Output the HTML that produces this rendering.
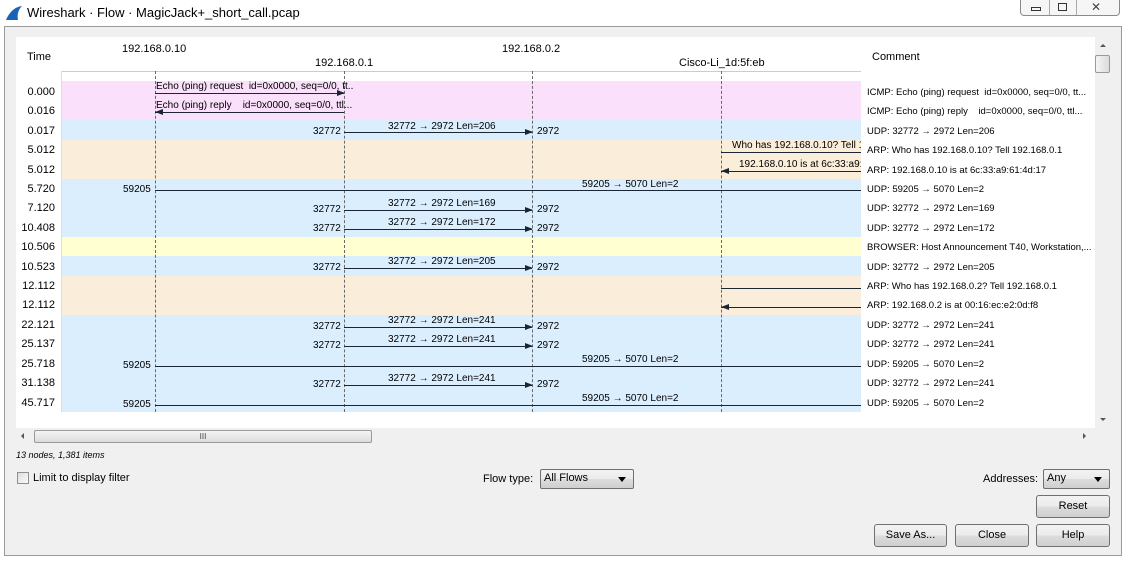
<!DOCTYPE html>
<html><head><meta charset="utf-8"><style>
*{margin:0;padding:0;box-sizing:border-box}
body{width:1126px;height:562px;background:#fff;font-family:"Liberation Sans",sans-serif;position:relative;overflow:hidden;color:#000}
div{position:absolute}
.t{font-size:10px;white-space:nowrap;line-height:12px}
.h{font-size:11px;white-space:nowrap}
.tm{font-size:11px;width:40px;text-align:right;left:15px;margin-top:1px}
.cm{font-size:9.5px;left:867px;white-space:nowrap;margin-top:1px}
.ln{height:1px;background:#1a2633}
.ar{width:0;height:0;border-top:3px solid transparent;border-bottom:3px solid transparent;border-left:8px solid #1a2633}
.al{width:0;height:0;border-top:3px solid transparent;border-bottom:3px solid transparent;border-right:8px solid #1a2633}
.v{width:0;border-left:1px dashed #6a6a6a;top:71px;height:341px}
.btn{border:1px solid #707070;border-radius:3px;background:linear-gradient(#f2f2f2,#ebebeb 50%,#dddddd 51%,#cfcfcf);font-size:11px;text-align:center;line-height:20px}
.cb{border:1px solid #707070;border-radius:2px;background:linear-gradient(#f2f2f2,#ebebeb 50%,#dddddd 51%,#cfcfcf);font-size:11px;line-height:17px;padding-left:3px}
.cb:after{content:"";position:absolute;right:7px;top:7px;border-left:4px solid transparent;border-right:4px solid transparent;border-top:5px solid #000}
</style></head><body>
<div style="left:5px;top:5px;width:18px;height:16px">
<svg width="18" height="16"><path d="M1 15 C4 8 9 2 17 1 C13 5 12 10 13 15 Z" fill="#1a64b8"/></svg></div>
<div style="left:27px;top:5px;font-size:13px">Wireshark · Flow · MagicJack+_short_call.pcap</div>
<div style="left:1020px;top:0;width:100px;height:16px;border:1px solid #8a8a8a;border-top:none;border-radius:0 0 4px 4px;background:#f6f6f6">
<div style="left:28px;top:0;width:1px;height:15px;background:#aaa"></div><div style="left:55px;top:0;width:1px;height:15px;background:#aaa"></div>
<div style="left:10px;top:7px;width:10px;height:4px;border:1px solid #333"></div>
<div style="left:37px;top:3px;width:9px;height:8px;border:1px solid #333"></div>
<div style="left:70px;top:0px;font-size:12px;color:#444">✕</div></div>
<div style="left:4px;top:26px;width:1118px;height:530px;background:#f0f0f0;border:1px solid #9a9a9a"></div>
<div style="left:16px;top:37px;width:1079px;height:391px;background:#fff"></div>
<div style="left:1095px;top:37px;width:16px;height:391px;background:#f0f0f0"></div>
<div style="left:1100px;top:44px;border-left:3px solid transparent;border-right:3px solid transparent;border-bottom:3px solid #555"></div>
<div style="left:1095px;top:55px;width:15px;height:18px;border:1px solid #999;border-radius:2px;background:linear-gradient(90deg,#f4f4f4,#dcdcdc)"></div>
<div style="left:1100px;top:418px;border-left:3px solid transparent;border-right:3px solid transparent;border-top:3px solid #555"></div>
<div style="left:16px;top:429px;width:1079px;height:15px;background:#f0f0f0"></div>
<div style="left:21px;top:433px;border-top:3px solid transparent;border-bottom:3px solid transparent;border-right:3px solid #555"></div>
<div style="left:34px;top:430px;width:338px;height:13px;border:1px solid #999;border-radius:2px;background:linear-gradient(#f4f4f4,#dcdcdc);font-size:8px;text-align:center;line-height:11px;color:#444">III</div>
<div style="left:1083px;top:433px;border-top:3px solid transparent;border-bottom:3px solid transparent;border-left:3px solid #555"></div>
<div class="h" style="left:27px;top:51px">Time</div>
<div class="h" style="left:122px;top:43px">192.168.0.10</div>
<div class="h" style="left:315px;top:57px">192.168.0.1</div>
<div class="h" style="left:502px;top:43px">192.168.0.2</div>
<div class="h" style="left:679px;top:57px">Cisco-Li_1d:5f:eb</div>
<div class="h" style="left:872px;top:51px">Comment</div>
<div style="left:61px;top:71px;width:800px;height:1px;background:#ccc"></div>
<div style="left:61px;top:71px;width:1px;height:341px;background:#ddd"></div>
<div style="left:62px;top:81px;width:799px;height:39px;background:#fbe0fb"></div>
<div style="left:62px;top:120px;width:799px;height:20px;background:#dbeefe"></div>
<div style="left:62px;top:140px;width:799px;height:39px;background:#faeeda"></div>
<div style="left:62px;top:179px;width:799px;height:58px;background:#dbeefe"></div>
<div style="left:62px;top:237px;width:799px;height:19px;background:#ffffd2"></div>
<div style="left:62px;top:256px;width:799px;height:20px;background:#dbeefe"></div>
<div style="left:62px;top:276px;width:799px;height:39px;background:#faeeda"></div>
<div style="left:62px;top:315px;width:799px;height:97px;background:#dbeefe"></div>
<div class="v" style="left:155px"></div><div class="v" style="left:344px"></div><div class="v" style="left:532px"></div><div class="v" style="left:721px"></div>
<div class="tm" style="top:85px">0.000</div>
<div class="tm" style="top:104px">0.016</div>
<div class="tm" style="top:124px">0.017</div>
<div class="tm" style="top:143px">5.012</div>
<div class="tm" style="top:163px">5.012</div>
<div class="tm" style="top:182px">5.720</div>
<div class="tm" style="top:201px">7.120</div>
<div class="tm" style="top:221px">10.408</div>
<div class="tm" style="top:240px">10.506</div>
<div class="tm" style="top:260px">10.523</div>
<div class="tm" style="top:279px">12.112</div>
<div class="tm" style="top:298px">12.112</div>
<div class="tm" style="top:318px">22.121</div>
<div class="tm" style="top:337px">25.137</div>
<div class="tm" style="top:357px">25.718</div>
<div class="tm" style="top:376px">31.138</div>
<div class="tm" style="top:396px">45.717</div>
<div class="t" style="left:156px;top:81px">Echo (ping) request&nbsp; id=0x0000, seq=0/0, tt..</div>
<div class="ln" style="left:155px;top:93px;width:189px"></div><div class="ar" style="left:337px;top:90px"></div>
<div class="t" style="left:156px;top:100px">Echo (ping) reply&nbsp;&nbsp;&nbsp; id=0x0000, seq=0/0, ttl...</div>
<div class="ln" style="left:155px;top:112px;width:189px"></div><div class="al" style="left:155px;top:109px"></div>
<div class="t" style="left:388px;top:121px">32772 → 2972 Len=206</div>
<div class="t" style="left:313px;top:126px">32772</div><div class="t" style="left:537px;top:126px">2972</div>
<div class="ln" style="left:344px;top:132px;width:188px"></div><div class="ar" style="left:525px;top:129px"></div>
<div class="t" style="left:732px;top:140px">Who has 192.168.0.10? Tell 192</div>
<div class="ln" style="left:721px;top:152px;width:140px"></div>
<div class="t" style="left:739px;top:159px">192.168.0.10 is at 6c:33:a9:61</div>
<div class="ln" style="left:721px;top:171px;width:140px"></div><div class="al" style="left:721px;top:168px"></div>
<div class="t" style="left:582px;top:179px">59205 → 5070 Len=2</div>
<div class="t" style="left:123px;top:184px">59205</div>
<div class="ln" style="left:155px;top:190px;width:706px"></div>
<div class="t" style="left:388px;top:198px">32772 → 2972 Len=169</div>
<div class="t" style="left:313px;top:204px">32772</div><div class="t" style="left:537px;top:204px">2972</div>
<div class="ln" style="left:344px;top:210px;width:188px"></div><div class="ar" style="left:525px;top:207px"></div>
<div class="t" style="left:388px;top:217px">32772 → 2972 Len=172</div>
<div class="t" style="left:313px;top:223px">32772</div><div class="t" style="left:537px;top:223px">2972</div>
<div class="ln" style="left:344px;top:229px;width:188px"></div><div class="ar" style="left:525px;top:226px"></div>
<div class="t" style="left:388px;top:256px">32772 → 2972 Len=205</div>
<div class="t" style="left:313px;top:262px">32772</div><div class="t" style="left:537px;top:262px">2972</div>
<div class="ln" style="left:344px;top:268px;width:188px"></div><div class="ar" style="left:525px;top:265px"></div>
<div class="ln" style="left:721px;top:288px;width:140px"></div>
<div class="ln" style="left:721px;top:307px;width:140px"></div><div class="al" style="left:721px;top:304px"></div>
<div class="t" style="left:388px;top:315px">32772 → 2972 Len=241</div>
<div class="t" style="left:313px;top:321px">32772</div><div class="t" style="left:537px;top:321px">2972</div>
<div class="ln" style="left:344px;top:327px;width:188px"></div><div class="ar" style="left:525px;top:324px"></div>
<div class="t" style="left:388px;top:334px">32772 → 2972 Len=241</div>
<div class="t" style="left:313px;top:340px">32772</div><div class="t" style="left:537px;top:340px">2972</div>
<div class="ln" style="left:344px;top:346px;width:188px"></div><div class="ar" style="left:525px;top:343px"></div>
<div class="t" style="left:582px;top:354px">59205 → 5070 Len=2</div>
<div class="t" style="left:123px;top:360px">59205</div>
<div class="ln" style="left:155px;top:366px;width:706px"></div>
<div class="t" style="left:388px;top:373px">32772 → 2972 Len=241</div>
<div class="t" style="left:313px;top:379px">32772</div><div class="t" style="left:537px;top:379px">2972</div>
<div class="ln" style="left:344px;top:385px;width:188px"></div><div class="ar" style="left:525px;top:382px"></div>
<div class="t" style="left:582px;top:393px">59205 → 5070 Len=2</div>
<div class="t" style="left:123px;top:399px">59205</div>
<div class="ln" style="left:155px;top:405px;width:706px"></div>
<div style="left:861px;top:71px;width:234px;height:342px;background:#fff"></div>
<div class="cm" style="top:86px">ICMP: Echo (ping) request&nbsp; id=0x0000, seq=0/0, tt...</div>
<div class="cm" style="top:105px">ICMP: Echo (ping) reply&nbsp;&nbsp;&nbsp; id=0x0000, seq=0/0, ttl...</div>
<div class="cm" style="top:125px">UDP: 32772 → 2972 Len=206</div>
<div class="cm" style="top:144px">ARP: Who has 192.168.0.10? Tell 192.168.0.1</div>
<div class="cm" style="top:164px">ARP: 192.168.0.10 is at 6c:33:a9:61:4d:17</div>
<div class="cm" style="top:183px">UDP: 59205 → 5070 Len=2</div>
<div class="cm" style="top:202px">UDP: 32772 → 2972 Len=169</div>
<div class="cm" style="top:222px">UDP: 32772 → 2972 Len=172</div>
<div class="cm" style="top:241px">BROWSER: Host Announcement T40, Workstation,...</div>
<div class="cm" style="top:261px">UDP: 32772 → 2972 Len=205</div>
<div class="cm" style="top:280px">ARP: Who has 192.168.0.2? Tell 192.168.0.1</div>
<div class="cm" style="top:299px">ARP: 192.168.0.2 is at 00:16:ec:e2:0d:f8</div>
<div class="cm" style="top:319px">UDP: 32772 → 2972 Len=241</div>
<div class="cm" style="top:338px">UDP: 32772 → 2972 Len=241</div>
<div class="cm" style="top:358px">UDP: 59205 → 5070 Len=2</div>
<div class="cm" style="top:377px">UDP: 32772 → 2972 Len=241</div>
<div class="cm" style="top:397px">UDP: 59205 → 5070 Len=2</div>
<div style="left:16px;top:450px;font-size:9px;font-style:italic">13 nodes, 1,381 items</div>
<div style="left:17px;top:472px;width:12px;height:12px;border:1px solid #8e8f8f;background:linear-gradient(135deg,#ddd,#fafafa)"></div>
<div style="left:33px;top:472px;font-size:11px">Limit to display filter</div>
<div style="left:483px;top:473px;font-size:11px">Flow type:</div>
<div class="cb" style="left:540px;top:469px;width:94px;height:20px">All Flows</div>
<div style="left:983px;top:473px;font-size:11px">Addresses:</div>
<div class="cb" style="left:1043px;top:469px;width:67px;height:20px">Any</div>
<div class="btn" style="left:1036px;top:495px;width:74px;height:23px">Reset</div>
<div class="btn" style="left:874px;top:524px;width:73px;height:23px">Save As...</div>
<div class="btn" style="left:955px;top:524px;width:74px;height:23px">Close</div>
<div class="btn" style="left:1036px;top:524px;width:74px;height:23px">Help</div>
</body></html>
